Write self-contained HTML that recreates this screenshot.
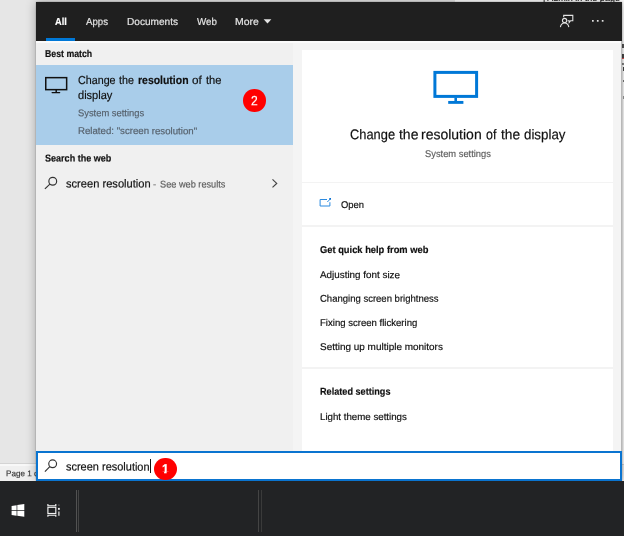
<!DOCTYPE html>
<html><head><meta charset="utf-8">
<style>
*{box-sizing:border-box;margin:0;padding:0}
html,body{width:624px;height:536px;overflow:hidden;background:#e6e6e6;font-family:"Liberation Sans",sans-serif;}
body{position:relative}
.a{position:absolute}
.t{position:absolute;white-space:nowrap;line-height:1;transform-origin:0 0;-webkit-text-stroke:.18px currentColor}
svg{position:absolute;left:0;top:0}
</style></head><body>
<div class="a" style="left:0;top:0;width:624px;height:536px;will-change:transform">
<!-- background document behind the panel -->

<div class="a" style="left:0;top:464px;width:36px;height:17px;background:#f0f0f0;border-top:2px solid #f8f8f8"></div>
<div class="a" style="left:0;top:463px;width:36px;height:1px;background:#d4d4d4"></div>
<div class="a" style="left:0;top:466px;width:36px;height:15px;overflow:hidden"><div class="t" style="left:6.1px;top:3px;font-size:8.4px;color:#3a3a3a;transform:translateY(.2px) scaleX(.97) rotate(.03deg)">Page 1 of 3</div></div>
<div class="a" style="left:455px;top:0;width:169px;height:3px;background:#fff;overflow:hidden"><div class="t" style="left:88px;top:-6.5px;font-size:9px;color:#222">| Admin in the page b</div></div>
<div class="a" style="left:621px;top:0;width:3px;height:464px;background:#fff"></div>
<div class="a" style="left:621px;top:464px;width:3px;height:17px;background:#f0f0f0;border-top:1px solid #d4d4d4"></div>
<div class="a" style="left:622px;top:44px;width:2px;height:3.500px;background:#555"></div>
<div class="a" style="left:622px;top:54px;width:2px;height:3.500px;background:#4a4a4a"></div>
<div class="a" style="left:622px;top:57.500px;width:2px;height:1.500px;background:#e05050"></div>
<div class="a" style="left:622px;top:63px;width:2px;height:2px;background:#888"></div>
<div class="a" style="left:622.500px;top:67px;width:1.500px;height:3.500px;background:#444"></div>
<div class="a" style="left:622.500px;top:79.500px;width:1.500px;height:2.500px;background:#777"></div>
<div class="a" style="left:622.500px;top:96px;width:1.500px;height:3px;background:#999"></div>
<!-- search panel -->
<div class="a" style="left:36px;top:2px;width:586px;height:479px;box-shadow:0 0 10px rgba(0,0,0,.3),0 0 1.5px rgba(0,0,0,.35)"></div>
<div class="a" style="left:36px;top:2px;width:586px;height:39px;background:#1f1f1f"></div>
<div class="a" style="left:36px;top:41px;width:257px;height:410px;background:#f0f0f0"></div>
<div class="a" style="left:293px;top:41px;width:329px;height:410px;background:#f4f4f4"></div>
<div class="a" style="left:36px;top:40.5px;width:586px;height:2.3px;background:#fbfbfb"></div>
<div class="a" style="left:621.3px;top:41px;width:.9px;height:410px;background:#b8b8b8"></div>
<div class="a" style="left:45.5px;top:37.5px;width:29.7px;height:3px;background:#0078d7"></div>
<!-- best match highlight -->
<div class="a" style="left:36px;top:65px;width:257px;height:80.3px;background:#a9cdea"></div>
<!-- right card -->
<div class="a" style="left:302px;top:50px;width:311px;height:401px;background:#fff"></div>
<div class="a" style="left:302px;top:181.6px;width:311px;height:1.9px;background:#f3f3f3"></div>
<div class="a" style="left:302px;top:224.6px;width:311px;height:2px;background:#f3f3f3"></div>
<div class="a" style="left:302px;top:366.9px;width:311px;height:2px;background:#f3f3f3"></div>
<!-- search box -->
<div class="a" style="left:36px;top:451px;width:586px;height:30px;background:#fff;border:2px solid #0a74d0"></div>
<div class="a" style="left:150px;top:459px;width:1px;height:14px;background:#111"></div>
<!-- taskbar -->
<div class="a" style="left:0;top:481px;width:624px;height:55px;background:#222325"></div>
<div class="a" style="left:76.2px;top:490px;width:1px;height:42px;background:#525252"></div>
<div class="a" style="left:78.4px;top:490px;width:1px;height:42px;background:#444"></div>
<div class="a" style="left:258.2px;top:490px;width:1px;height:42px;background:#444"></div>
<div class="a" style="left:261.2px;top:490px;width:1px;height:42px;background:#3a3a3a"></div>
<!-- badges -->
<div class="a" style="left:243.200px;top:89.200px;width:22.600px;height:22.600px;border-radius:50%;background:#ff0000"></div>
<div class="t" style="left:251px;top:94px;font-size:13.400px;color:#fff;transform:translateY(.2px) scaleX(.9) rotate(.03deg)">2</div>
<div class="a" style="left:154.400px;top:458.200px;width:22.300px;height:22.300px;border-radius:50%;background:#ff0000"></div>
<div class="t" style="left:162px;top:462px;font-size:13px;font-weight:bold;color:#fff;transform:translateY(.3px) scaleX(.95) rotate(.03deg);clip-path:polygon(0 0,100% 0,100% 9.5px,4.9px 9.5px,4.9px 13px,2.2px 13px,2.2px 9.5px,0 9.5px)">1</div>
<div class="t" style="left:54.50px;top:16px;font-size:10.2px;font-weight:bold;color:#ffffff;transform:translateY(0.99px) scaleX(0.9077) rotate(.03deg)">All</div>
<div class="t" style="left:86.00px;top:16px;font-size:10.2px;color:#e4e4e4;transform:translateY(0.99px) scaleX(0.9478) rotate(.03deg)">Apps</div>
<div class="t" style="left:126.51px;top:16px;font-size:10.2px;color:#e4e4e4;transform:translateY(0.99px) scaleX(0.9900) rotate(.03deg)">Documents</div>
<div class="t" style="left:196.70px;top:16px;font-size:10.2px;color:#e4e4e4;transform:translateY(0.99px) scaleX(0.9600) rotate(.03deg)">Web</div>
<div class="t" style="left:234.87px;top:16px;font-size:10.2px;color:#e4e4e4;transform:translateY(0.99px) scaleX(1.0273) rotate(.03deg)">More</div>
<div class="t" style="left:45.40px;top:48px;font-size:10px;font-weight:bold;color:#101010;transform:translateY(0.99px) scaleX(0.8759) rotate(.03deg)">Best match</div>
<div class="t" style="left:77.80px;top:74px;font-size:11.6px;color:#101010;transform:translateY(0.09px) scaleX(0.9250) rotate(.03deg)">Change</div>
<div class="t" style="left:118.90px;top:74px;font-size:11.6px;color:#101010;transform:translateY(0.09px) scaleX(0.9250) rotate(.03deg)">the</div>
<div class="t" style="left:137.70px;top:74px;font-size:11.6px;font-weight:bold;color:#101010;transform:translateY(0.09px) scaleX(0.9018) rotate(.03deg)">resolution</div>
<div class="t" style="left:192.10px;top:74px;font-size:11.6px;color:#101010;transform:translateY(0.09px) scaleX(1.0100) rotate(.03deg)">of</div>
<div class="t" style="left:205.50px;top:74px;font-size:11.6px;color:#101010;transform:translateY(0.09px) scaleX(0.9625) rotate(.03deg)">the</div>
<div class="t" style="left:77.80px;top:88px;font-size:11.6px;color:#101010;transform:translateY(0.89px) scaleX(0.9528) rotate(.03deg)">display</div>
<div class="t" style="left:77.70px;top:108px;font-size:9.8px;color:#56616c;transform:translateY(0.19px) scaleX(0.9565) rotate(.03deg)">System settings</div>
<div class="t" style="left:77.70px;top:126px;font-size:9.8px;color:#56616c;transform:translateY(0.09px) scaleX(0.9860) rotate(.03deg)">Related: &quot;screen resolution&quot;</div>
<div class="t" style="left:45.40px;top:153px;font-size:10px;font-weight:bold;color:#101010;transform:translateY(0.49px) scaleX(0.9041) rotate(.03deg)">Search the web</div>
<div class="t" style="left:65.80px;top:177px;font-size:11.6px;color:#101010;transform:translateY(0.49px) scaleX(0.9591) rotate(.03deg)">screen resolution</div>
<div class="t" style="left:153.30px;top:179px;font-size:9.8px;color:#5e5e5e;transform:translateY(0.39px) scaleX(0.9667) rotate(.03deg)">-</div>
<div class="t" style="left:159.70px;top:179px;font-size:9.8px;color:#5e5e5e;transform:translateY(0.39px) scaleX(0.9386) rotate(.03deg)">See web results</div>
<div class="t" style="left:350.00px;top:127px;font-size:14.2px;color:#101010;transform:translateY(0.19px) scaleX(0.9061) rotate(.03deg)">Change</div>
<div class="t" style="left:399.20px;top:127px;font-size:14.2px;color:#101010;transform:translateY(0.19px) scaleX(0.9842) rotate(.03deg)">the</div>
<div class="t" style="left:421.31px;top:127px;font-size:14.2px;color:#101010;transform:translateY(0.19px) scaleX(0.9867) rotate(.03deg)">resolution</div>
<div class="t" style="left:486.00px;top:127px;font-size:14.2px;color:#101010;transform:translateY(0.19px) scaleX(0.8750) rotate(.03deg)">of</div>
<div class="t" style="left:500.80px;top:127px;font-size:14.2px;color:#101010;transform:translateY(0.19px) scaleX(0.9684) rotate(.03deg)">the</div>
<div class="t" style="left:523.50px;top:127px;font-size:14.2px;color:#101010;transform:translateY(0.19px) scaleX(0.9386) rotate(.03deg)">display</div>
<div class="t" style="left:424.60px;top:148px;font-size:9.8px;color:#5e5e5e;transform:translateY(0.99px) scaleX(0.9536) rotate(.03deg)">System settings</div>
<div class="t" style="left:341.00px;top:199px;font-size:9.8px;color:#101010;transform:translateY(0.99px) scaleX(0.9583) rotate(.03deg)">Open</div>
<div class="t" style="left:319.70px;top:244px;font-size:10px;font-weight:bold;color:#101010;transform:translateY(0.99px) scaleX(0.9336) rotate(.03deg)">Get quick help from web</div>
<div class="t" style="left:319.70px;top:270px;font-size:9.8px;color:#101010;transform:translateY(0.09px) scaleX(1.0063) rotate(.03deg)">Adjusting font size</div>
<div class="t" style="left:319.70px;top:293px;font-size:9.8px;color:#101010;transform:translateY(0.79px) scaleX(0.9713) rotate(.03deg)">Changing screen brightness</div>
<div class="t" style="left:319.70px;top:317px;font-size:9.8px;color:#101010;transform:translateY(0.99px) scaleX(0.9768) rotate(.03deg)">Fixing screen flickering</div>
<div class="t" style="left:319.70px;top:341px;font-size:9.8px;color:#101010;transform:translateY(0.89px) scaleX(1.0165) rotate(.03deg)">Setting up multiple monitors</div>
<div class="t" style="left:319.70px;top:386px;font-size:10px;font-weight:bold;color:#101010;transform:translateY(0.69px) scaleX(0.9130) rotate(.03deg)">Related settings</div>
<div class="t" style="left:319.70px;top:411px;font-size:9.8px;color:#101010;transform:translateY(0.89px) scaleX(0.9909) rotate(.03deg)">Light theme settings</div>
<div class="t" style="left:65.50px;top:460px;font-size:11.6px;color:#101010;transform:translateY(0.59px) scaleX(0.9466) rotate(.03deg)">screen resolution</div>
<svg width="624" height="536" viewBox="0 0 624 536" fill="none">
<!-- more caret -->
<path d="M263.6 19.3h7.8l-3.9 4.3z" fill="#e4e4e4"/>
<!-- feedback icon -->
<g stroke="#e2e2e2" stroke-width="1.1">
<path d="M563.7 17.300V15.400H572.800V20.700H570.600L569.200 22.500V20.700H567.700"/>
<circle cx="564.600" cy="20.500" r="2.150"/>
<path d="M560.400 27.100C560.900 24.100 562.700 22.950 564.600 22.950S568.300 24.100 568.800 27.100"/>
</g>
<g fill="#e2e2e2"><rect x="592" y="20" width="1.700" height="1.700"/><rect x="596.900" y="20" width="1.700" height="1.700"/><rect x="601.800" y="20" width="1.700" height="1.700"/></g>
<!-- small monitor -->
<g stroke="#111" stroke-width="1.5"><rect x="45.750" y="77.650" width="20.900" height="12"/><path d="M56.200 89.600v3"/><path d="M52.100 92.600h7.600" stroke-width="1.200" stroke-linecap="round"/></g>
<!-- search glyph (web row) -->
<g stroke="#333" stroke-width="1.150"><circle cx="52.750" cy="181.250" r="3.900"/><path d="M49.900 184.100L44.900 188.900"/></g>
<path d="M272.500 179.400l4.200 4-4.200 4" stroke="#444" stroke-width="1.200"/>
<!-- big monitor -->
<g stroke="#0078d7"><rect x="434.900" y="72.400" width="41.700" height="24" stroke-width="3"/><path d="M455.700 97.500v4" stroke-width="2.600"/><path d="M448.200 102.400h15.200" stroke-width="2.900"/></g>
<!-- open icon -->
<g stroke="#2b8ae0" stroke-width="1"><path d="M327 199.500h-6.900v6.500h9.800v-3.800"/><path d="M327.300 202l3-3"/></g><rect x="329.300" y="198" width="1.700" height="1.700" fill="#0a6fd0"/>
<!-- search glyph (box) -->
<g stroke="#333" stroke-width="1.150"><circle cx="52.650" cy="463.800" r="3.900"/><path d="M49.800 466.650L44.900 471.700"/></g>
<!-- windows logo -->
<g fill="#fff"><path d="M11.600 505.900l5-.7v4.900h-5zM17.300 505.100l7-1v6h-7zM11.600 510.800h5v4.900l-5-.7zM17.300 510.800h7v6l-7-1z"/></g>
<!-- task view -->
<g stroke="#f2f2f2" stroke-width="1.150"><rect x="47.900" y="507.300" width="7.900" height="6.200"/><path d="M47.900 504.100v1.600h7.900v-1.600M47.900 516.800v-1.600h7.900v1.600M58.900 511.500v4.300"/></g><rect x="58" y="507.900" width="1.800" height="1.900" fill="#f2f2f2"/><rect x="58.400" y="504.600" width="1" height="1" fill="#999"/>
</svg>
</div>
</body></html>
